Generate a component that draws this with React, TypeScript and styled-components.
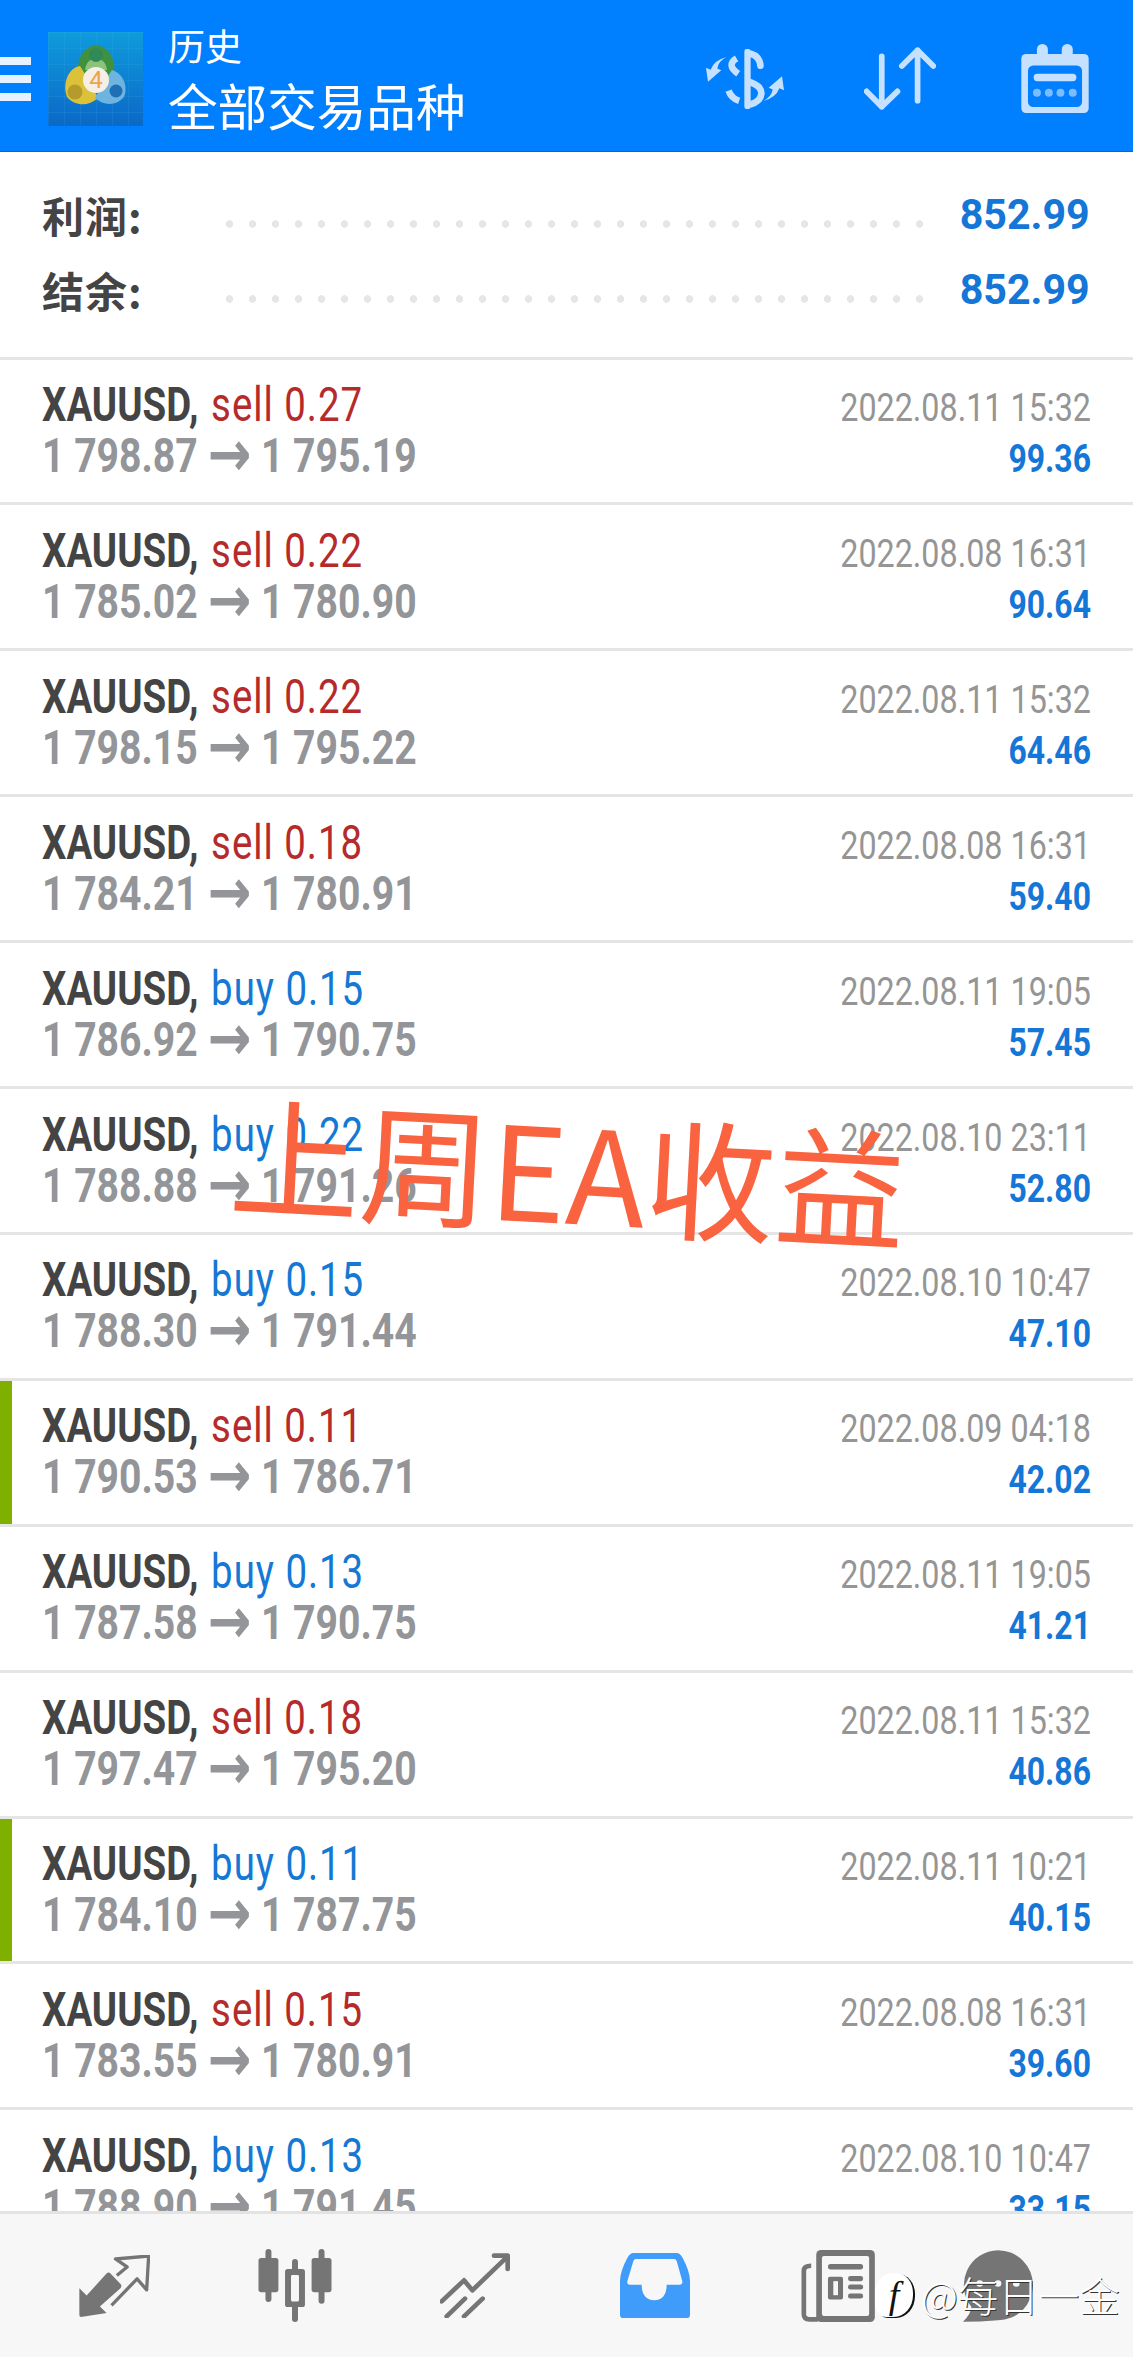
import { createGlobalStyle, styled } from 'styled-components';

const GlobalStyle = createGlobalStyle`
    html, body {
        margin: 0;
        padding: 0;
        background: #fff;
    }
`;

const SUMMARY = [
    { label: '利润:', value: '852.99' },
    { label: '结余:', value: '852.99' },
];

const TRADES = [
    { side: 'sell', lots: '0.27', open: '1 798.87', close: '1 795.19', time: '2022.08.11 15:32', profit: '99.36' },
    { side: 'sell', lots: '0.22', open: '1 785.02', close: '1 780.90', time: '2022.08.08 16:31', profit: '90.64' },
    { side: 'sell', lots: '0.22', open: '1 798.15', close: '1 795.22', time: '2022.08.11 15:32', profit: '64.46' },
    { side: 'sell', lots: '0.18', open: '1 784.21', close: '1 780.91', time: '2022.08.08 16:31', profit: '59.40' },
    { side: 'buy', lots: '0.15', open: '1 786.92', close: '1 790.75', time: '2022.08.11 19:05', profit: '57.45' },
    { side: 'buy', lots: '0.22', open: '1 788.88', close: '1 791.26', time: '2022.08.10 23:11', profit: '52.80' },
    { side: 'buy', lots: '0.15', open: '1 788.30', close: '1 791.44', time: '2022.08.10 10:47', profit: '47.10' },
    { side: 'sell', lots: '0.11', open: '1 790.53', close: '1 786.71', time: '2022.08.09 04:18', profit: '42.02', marked: true },
    { side: 'buy', lots: '0.13', open: '1 787.58', close: '1 790.75', time: '2022.08.11 19:05', profit: '41.21' },
    { side: 'sell', lots: '0.18', open: '1 797.47', close: '1 795.20', time: '2022.08.11 15:32', profit: '40.86' },
    { side: 'buy', lots: '0.11', open: '1 784.10', close: '1 787.75', time: '2022.08.11 10:21', profit: '40.15', marked: true },
    { side: 'sell', lots: '0.15', open: '1 783.55', close: '1 780.91', time: '2022.08.08 16:31', profit: '39.60' },
    { side: 'buy', lots: '0.13', open: '1 788.90', close: '1 791.45', time: '2022.08.10 10:47', profit: '33.15' },
];

const HEADER_ICON = '#c6e1ff';
const NAV_GREY = '#757575';
const NAV_BG = '#f7f7f7';

function MetaTraderLogo() {
    return (
        <svg width="95" height="94" viewBox="0 0 95 94">
            <defs>
                <linearGradient id="tile" x1="0" y1="0" x2="0" y2="1">
                    <stop offset="0" stopColor="#0f9bdc" />
                    <stop offset="1" stopColor="#0b68c8" />
                </linearGradient>
                <pattern id="tileGrid" width="16" height="16" patternUnits="userSpaceOnUse">
                    <path d="M16 0H0V16" fill="none" stroke="#5db9ee" strokeOpacity="0.22" strokeWidth="1" />
                </pattern>
            </defs>
            <rect width="95" height="94" fill="url(#tile)" />
            <rect width="95" height="94" fill="url(#tileGrid)" />
            <path d="M48 13C35 15 28 28 30 42L40 46L56 46L66 42C68 28 61 15 48 13Z" fill="#3f9140" />
            <path d="M37 38C38 30 42 27 48 27C54 27 58 30 59 38Z" fill="#8cc27a" />
            <circle cx="48" cy="23" r="7" fill="#2f8a58" />
            <path d="M32 34C20 36 14 52 19 65C27 74 40 75 50 66L42 50Z" fill="#dcc23a" />
            <circle cx="27" cy="60" r="7.5" fill="#b59a2c" />
            <path d="M64 38C76 42 80 55 76 65C68 74 56 74 47 66L56 50Z" fill="#6db4e0" />
            <circle cx="68" cy="59" r="6.5" fill="#1f6fb4" />
            <circle cx="48" cy="48" r="13" fill="#f6efe6" />
            <OrangeFour x="48" y="56" textAnchor="middle">4</OrangeFour>
        </svg>
    );
}

function DollarIcon() {
    return (
        <svg width="78" height="60" viewBox="0 0 235 180" fill="none" stroke={HEADER_ICON} strokeLinecap="round">
            <path d="M125 8V172" strokeWidth="19" />
            <path d="M135 14Q162 22 164 50" strokeWidth="20" />
            <path d="M92 28Q60 48 97 74" strokeWidth="20" strokeLinecap="butt" />
            <path d="M68 125Q76 148 100 156" strokeWidth="20" strokeLinecap="butt" />
            <path d="M135 100Q167 112 167 133Q164 158 135 166" strokeWidth="20" />
            <path d="M62 24Q38 36 34 58L46 64L6 98L0 56L14 62Q24 34 62 24Z" fill={HEADER_ICON} stroke="none" />
            <path d="M62 24Q38 36 34 58L46 64L6 98L0 56L14 62Q24 34 62 24Z" fill={HEADER_ICON} stroke="none" transform="rotate(180 117.5 90)" />
        </svg>
    );
}

function SortIcon() {
    return (
        <svg width="72" height="63" viewBox="0 0 215 187" fill="none" stroke={HEADER_ICON} strokeWidth="17" strokeLinecap="round" strokeLinejoin="round">
            <path d="M53 27V178M8 132L53 178L100 132" />
            <path d="M160 9V160M113 56L160 9L207 56" />
        </svg>
    );
}

function CalendarIcon() {
    return (
        <svg width="68" height="69" viewBox="0 0 203 208">
            <rect y="30" width="203" height="178" rx="14" fill={HEADER_ICON} />
            <rect x="47" width="33" height="44" rx="16" fill={HEADER_ICON} />
            <rect x="122" width="33" height="44" rx="16" fill={HEADER_ICON} />
            <rect x="20" y="65" width="163" height="125" rx="16" fill="#007fff" />
            <rect x="37" y="90" width="129" height="22" rx="11" fill={HEADER_ICON} />
            <g fill="#7dbcff">
                <circle cx="47" cy="147" r="12" />
                <circle cx="83" cy="147" r="12" />
                <circle cx="118" cy="147" r="12" />
                <circle cx="155" cy="147" r="12" />
            </g>
        </svg>
    );
}

function TradeIcon() {
    return (
        <svg width="72" height="62" viewBox="0 0 215 187">
            <path d="M3 100L25 122L85 56Q91 50 97 56L128 88Q132 95 127 100L65 155L85 175L8 187Q3 187 3 180Z" fill={NAV_GREY} />
            <path d="M116 62L147 36L112 12L212 3L206 105L177 72L100 152" fill="none" stroke={NAV_GREY} strokeWidth="10" strokeLinejoin="round" />
        </svg>
    );
}

function CandlesIcon() {
    return (
        <svg width="74" height="73" viewBox="0 0 220 220" fill={NAV_GREY}>
            <rect x="21" width="18" height="160" rx="9" />
            <rect y="27" width="60" height="103" rx="8" />
            <rect x="101" y="30" width="18" height="190" rx="9" />
            <rect x="80" y="60" width="60" height="115" rx="8" />
            <rect x="98" y="78" width="24" height="80" rx="4" fill={NAV_BG} />
            <rect x="181" width="18" height="165" rx="9" />
            <rect x="160" y="27" width="60" height="103" rx="8" />
        </svg>
    );
}

function ChartIcon() {
    return (
        <svg width="70" height="65" viewBox="0 0 210 195" fill="none" stroke={NAV_GREY} strokeWidth="14" strokeLinecap="round" strokeLinejoin="round">
            <path d="M5 145L72 82L97 112L203 10" />
            <path d="M162 8H203V48" />
            <path d="M75 137L20 190" />
            <path d="M128 137L72 190" />
        </svg>
    );
}

function InboxIcon() {
    return (
        <svg width="70" height="65" viewBox="0 0 210 195">
            <path d="M40 0H170Q180 0 188 15Q210 55 210 85V185Q210 195 200 195H10Q0 195 0 185V85Q0 55 22 15Q30 0 40 0Z" fill="#3f9cfb" />
            <path d="M48 18H162Q168 18 170 24L187 85Q188 95 178 95H140Q140 140 103 142Q65 140 65 95H30Q20 95 22 85L40 24Q42 18 48 18Z" fill={NAV_BG} />
        </svg>
    );
}

function NewsIcon() {
    return (
        <svg width="74" height="72" viewBox="0 0 220 215">
            <path d="M30 47Q8 47 8 62V192Q8 207 25 207H50" fill="none" stroke={NAV_GREY} strokeWidth="14" />
            <rect x="45" width="175" height="215" rx="14" fill={NAV_GREY} />
            <rect x="62" y="18" width="141" height="179" rx="6" fill={NAV_BG} />
            <g fill={NAV_GREY}>
                <rect x="80" y="42" width="105" height="16" rx="8" />
                <rect x="80" y="80" width="45" height="68" rx="6" />
                <rect x="140" y="78" width="45" height="15" rx="7" />
                <rect x="140" y="103" width="45" height="15" rx="7" />
                <rect x="140" y="130" width="45" height="15" rx="7" />
            </g>
            <rect x="96" y="93" width="14" height="42" fill={NAV_BG} />
        </svg>
    );
}

function ChatIcon() {
    return (
        <svg width="70" height="72" viewBox="0 0 210 215">
            <path d="M105 0A105 105 0 0 1 105 210Q50 215 0 215Q25 190 25 170A105 105 0 0 1 105 0Z" fill={NAV_GREY} />
            <g fill={NAV_BG}>
                <circle cx="50" cy="100" r="10" />
                <circle cx="105" cy="100" r="10" />
                <circle cx="160" cy="100" r="10" />
            </g>
        </svg>
    );
}

function App() {
    return (
        <Page>
            <GlobalStyle />
            <Header>
                <Hamburger>
                    <HamburgerBar />
                    <HamburgerBar />
                    <HamburgerBar />
                </Hamburger>
                <LogoTile>
                    <MetaTraderLogo />
                </LogoTile>
                <Titles>
                    <SmallTitle>历史</SmallTitle>
                    <BigTitle>全部交易品种</BigTitle>
                </Titles>
                <HeaderActions>
                    <DollarIcon />
                    <SortIcon />
                    <CalendarSlot>
                        <CalendarIcon />
                    </CalendarSlot>
                </HeaderActions>
            </Header>

            <Summary>
                {SUMMARY.map((item) => (
                    <SummaryRow key={item.label}>
                        <SummaryLabel>{item.label}</SummaryLabel>
                        <Leader />
                        <SummaryValue>{item.value}</SummaryValue>
                    </SummaryRow>
                ))}
            </Summary>

            <TradeList>
                {TRADES.map((trade) => (
                    <TradeRow key={trade.open + trade.time} $marked={trade.marked}>
                        <TradeTitle>
                            <Symbol>XAUUSD, </Symbol>
                            <Side $side={trade.side}>{trade.side} {trade.lots}</Side>
                        </TradeTitle>
                        <TimeCell>{trade.time}</TimeCell>
                        <Prices>{trade.open} <Arrow>→</Arrow> {trade.close}</Prices>
                        <ProfitCell>{trade.profit}</ProfitCell>
                    </TradeRow>
                ))}
                <Stamp>上周EA收益</Stamp>
            </TradeList>

            <BottomNav>
                <TradeIcon />
                <CandlesIcon />
                <ChartIcon />
                <NavSlot $nudge={2}>
                    <InboxIcon />
                </NavSlot>
                <NavSlot $nudge={3}>
                    <NewsIcon />
                </NavSlot>
                <NavSlot $nudge={-20}>
                    <ChatIcon />
                </NavSlot>
                <Watermark>
                    <WatermarkBadge>f</WatermarkBadge>
                    <WatermarkText>@每日一金</WatermarkText>
                </Watermark>
            </BottomNav>
        </Page>
    );
}

export default App;

const Page = styled.div`
    display: flex;
    flex-direction: column;
    width: 1133px;
    height: 2357px;
    overflow: hidden;
    background: #fff;
    font-family: Roboto, "Noto Sans CJK SC", sans-serif;
`;

const Header = styled.header`
    flex: none;
    box-sizing: border-box;
    display: flex;
    align-items: center;
    height: 152px;
    padding: 13px 44px 7px 0;
    background: #007fff;
    border-bottom: 1px solid #0068d0;
`;

const Hamburger = styled.div`
    display: flex;
    flex-direction: column;
    gap: 10px;
    width: 31px;
`;

const HamburgerBar = styled.div`
    height: 8px;
    background: #e6f2ff;
`;

const LogoTile = styled.div`
    display: flex;
    margin-left: 17px;
`;

const OrangeFour = styled.text`
    font-family: Roboto, sans-serif;
    font-size: 24px;
    fill: #f0a24a;
`;

const Titles = styled.div`
    display: flex;
    flex-direction: column;
    margin-left: 25px;
    color: #fff;
    font-family: "Noto Sans CJK SC", sans-serif;
`;

const SmallTitle = styled.div`
    font-size: 37px;
    line-height: 50px;
`;

const BigTitle = styled.div`
    font-size: 49.6px;
    line-height: 68px;
`;

const HeaderActions = styled.div`
    display: flex;
    align-items: center;
    gap: 80px;
    margin-left: auto;
`;

const CalendarSlot = styled.div`
    display: flex;
    margin-left: 5px;
`;

const Summary = styled.section`
    flex: none;
    box-sizing: border-box;
    height: 207.5px;
    padding: 25px 43px 0 42px;
    border-bottom: 3px solid #e5e5e5;
`;

const SummaryRow = styled.div`
    display: flex;
    align-items: center;
    height: 75px;
`;

const SummaryLabel = styled.div`
    width: 176px;
    color: #444;
    font-family: "Noto Sans CJK SC", sans-serif;
    font-size: 42px;
    font-weight: 700;
    letter-spacing: 1px;
`;

const Leader = styled.div`
    flex: 1;
    height: 8px;
    margin: 18px 22px 0 0;
    background: radial-gradient(circle, #e6e6e6 3.5px, transparent 4px) left center / 23px 8px repeat-x;
`;

const SummaryValue = styled.div`
    color: #1476d6;
    font-size: 42px;
    font-weight: 700;
    transform: scaleX(0.98);
    transform-origin: right center;
`;

const TradeList = styled.section`
    position: relative;
    flex: 1;
    min-height: 0;
    overflow: hidden;
`;

const TradeRow = styled.article<{ $marked?: boolean }>`
    box-sizing: border-box;
    display: grid;
    grid-template-columns: 1fr auto;
    align-items: baseline;
    grid-auto-rows: 51px;
    height: 145.92px;
    padding: 19.5px 42px 0 42px;
    border-bottom: 3px solid #e5e5e5;
    box-shadow: ${({ $marked }) => ($marked ? 'inset 12px 0 0 #7fb000' : 'none')};
    white-space: pre;
`;

const TradeTitle = styled.div`
    font-size: 48px;
    line-height: 51px;
    transform: scaleX(0.8);
    transform-origin: left center;
`;

const Symbol = styled.span`
    color: #444;
    font-weight: 700;
`;

const Side = styled.span<{ $side: string }>`
    margin-left: 4px;
    color: ${({ $side }) => ($side === 'sell' ? '#b52a2a' : '#1478d4')};
    letter-spacing: 1.2px;
`;

const Prices = styled(TradeTitle)`
    color: #939598;
    font-weight: 700;
    transform: scaleX(0.815);
`;

const Arrow = styled.span`
    font-family: "DejaVu Sans", sans-serif;
    font-size: 64px;
    line-height: 40px;
    vertical-align: -4px;
`;

const TimeCell = styled.div`
    color: #959595;
    font-size: 38px;
    line-height: 51px;
    text-align: right;
    transform: scaleX(0.85);
    transform-origin: right center;
`;

const ProfitCell = styled(TimeCell)`
    color: #1476d6;
    font-weight: 700;
    transform: scaleX(0.84);
`;

const Stamp = styled.div`
    position: absolute;
    left: 231px;
    top: 714px;
    color: #f9633f;
    font-family: "Noto Sans CJK SC", sans-serif;
    font-size: 130px;
    line-height: 150px;
    white-space: nowrap;
    transform: rotate(3deg);
    transform-origin: left center;
`;

const BottomNav = styled.nav`
    position: relative;
    flex: none;
    box-sizing: border-box;
    display: flex;
    align-items: center;
    gap: 108px;
    height: 146px;
    padding-left: 78px;
    background: ${NAV_BG};
    border-top: 3px solid #e3e3e3;
`;

const NavSlot = styled.div<{ $nudge: number }>`
    display: flex;
    margin-left: ${({ $nudge }) => $nudge}px;
`;

const Watermark = styled.div`
    position: absolute;
    left: 875px;
    top: 59px;
    display: flex;
    align-items: center;
    gap: 8px;
`;

const WatermarkBadge = styled.div`
    width: 38px;
    height: 44px;
    border-radius: 45% 45% 50% 30%;
    background: #fff;
    box-shadow: 2px 1px 0 #111;
    color: #111;
    font-family: "Liberation Serif", serif;
    font-size: 38px;
    font-style: italic;
    line-height: 44px;
    text-align: center;
`;

const WatermarkText = styled.div`
    color: #fff;
    font-family: "Noto Sans CJK SC", sans-serif;
    font-size: 40.5px;
    font-weight: 300;
    line-height: 44px;
    text-shadow: 1px 1px 0 #333;
    white-space: nowrap;
`;
